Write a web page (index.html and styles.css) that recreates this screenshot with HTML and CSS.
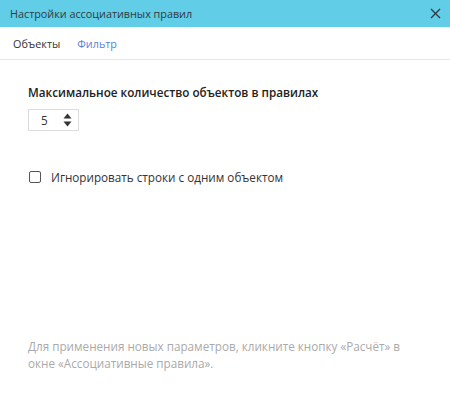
FILE: index.html
```html
<!DOCTYPE html>
<html lang="ru">
<head>
    <meta charset="UTF-8">
    <meta name="viewport" content="width=device-width, initial-scale=1.0">
    <title>Настройки ассоциативных правил</title>
    <link rel="stylesheet" href="styles.css">
</head>
<body>

    <!-- Dialog -->
    <div class="dialog">
        <div class="dialog-header">
            <span class="dialog-title">Настройки ассоциативных правил</span>
            <button class="close-btn" aria-label="Закрыть">
                <svg width="11" height="11" viewBox="0 0 11 11">
                    <path d="M1 1L10 10M10 1L1 10" stroke="#2c3e44" stroke-width="1.4"/>
                </svg>
            </button>
        </div>

        <div class="tabs">
            <span class="tab">Объекты</span>
            <span class="tab active">Фильтр</span>
        </div>

        <div class="dialog-body">
            <div class="field-label">Максимальное количество объектов в правилах</div>
            <div class="spinner">
                <span class="spinner-value">5</span>
                <svg class="spinner-arrows" width="9" height="14" viewBox="0 0 9 14">
                    <path d="M4.5 0.5L8.5 5.5H0.5Z" fill="#333"/>
                    <path d="M4.5 13.5L8.5 8.5H0.5Z" fill="#333"/>
                </svg>
            </div>

            <label class="check-row">
                <span class="checkbox"></span>
                <span>Игнорировать строки с одним объектом</span>
            </label>

            <p class="hint">Для применения новых параметров, кликните кнопку «Расчёт» в окне «Ассоциативные правила».</p>
        </div>
    </div>

</body>
</html>
```

FILE: styles.css
```css
/* Page */
body {
    margin: 0;
    font-family: "Open Sans", "Noto Sans", sans-serif;
    color: #333;
    background: #fff;
}

/* Dialog frame */
.dialog {
    width: 450px;
    height: 399px;
    display: flex;
    flex-direction: column;
    background: #fff;
}

/* Header bar */
.dialog-header {
    height: 27px;
    background-color: #62cde6;
    display: flex;
    align-items: center;
    justify-content: space-between;
    padding: 0 8px 0 10px;
    flex-shrink: 0;
}

.dialog-title {
    font-size: 10.8px;
    color: #2e3a3e;
}

.close-btn {
    background: none;
    border: none;
    padding: 0;
    width: 14px;
    height: 14px;
    display: flex;
    align-items: center;
    justify-content: center;
    cursor: pointer;
}

/* Tabs */
.tabs {
    height: 32px;
    display: flex;
    align-items: center;
    gap: 17px;
    padding: 0 13px;
    border-bottom: 1px solid #e6e6e6;
    flex-shrink: 0;
}

.tab {
    font-size: 10.8px;
    color: #333;
    cursor: pointer;
}

.tab.active {
    color: #5a7fd8;
}

/* Content */
.dialog-body {
    flex: 1;
    display: flex;
    flex-direction: column;
    padding: 23px 28px 27px;
}

.field-label {
    font-size: 11.7px;
    font-weight: 600;
    color: #222;
    line-height: 18px;
}

.spinner {
    width: 51px;
    height: 22px;
    box-sizing: border-box;
    border: 1px solid #dcdcdc;
    margin-top: 8px;
    display: flex;
    align-items: center;
    justify-content: space-between;
    padding: 0 6px 0 12px;
}

.spinner-value {
    font-size: 11.7px;
    color: #333;
}

.check-row {
    display: flex;
    align-items: center;
    gap: 10px;
    margin-top: 38px;
    margin-left: 1px;
    font-size: 11.7px;
    color: #333;
    cursor: pointer;
}

.checkbox {
    width: 12px;
    height: 12px;
    box-sizing: border-box;
    border: 1px solid #555;
    border-radius: 2px;
}

.hint {
    margin: auto 0 0;
    font-size: 11.7px;
    line-height: 17px;
    color: #aaa;
}
```
